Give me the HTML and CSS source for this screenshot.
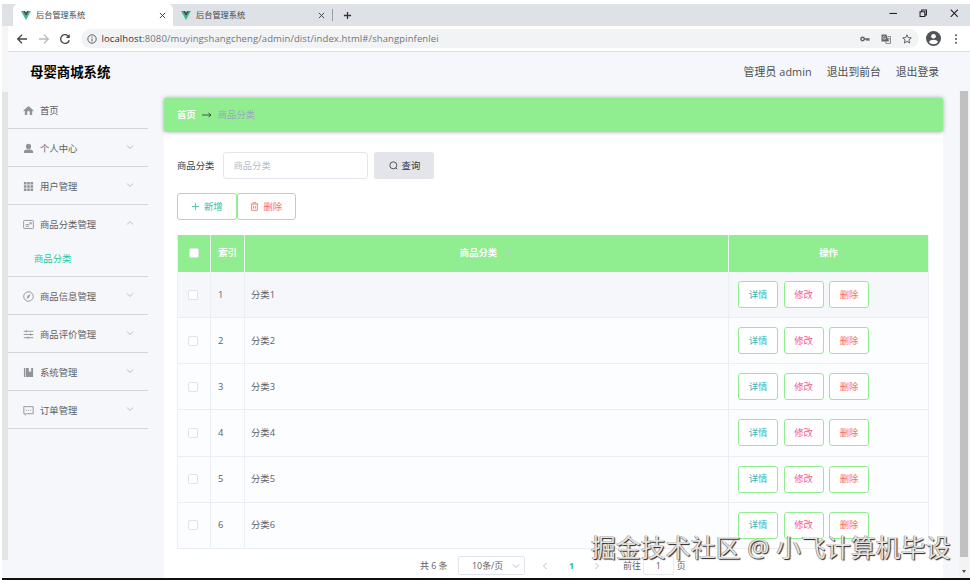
FILE: index.html
```
<!DOCTYPE html>
<html lang="zh-CN">
<head>
    <meta charset="UTF-8">
    <meta name="viewport" content="width=device-width, initial-scale=1.0">
    <title>后台管理系统</title>
    <link rel="stylesheet" href="styles.css">
</head>
<body>
    <!-- 图标 -->
    <svg class="sprite" width="0" height="0">
        <symbol id="vue" viewBox="0 0 10 9"><path d="M0 0h2l3 5.2L8 0h2L5 9z" fill="#41b883"/><path d="M2 0h2l1 1.8L6 0h2L5 5.2z" fill="#35495e"/></symbol>
        <symbol id="close" viewBox="0 0 8 8"><path d="M1 1l6 6M7 1L1 7"/></symbol>
        <symbol id="down" viewBox="0 0 8 8"><path d="M1 2.5l3 3 3-3"/></symbol>
        <symbol id="up" viewBox="0 0 8 8"><path d="M1 5.5l3-3 3 3"/></symbol>
        <symbol id="left" viewBox="0 0 8 8"><path d="M5.5 1l-3 3 3 3"/></symbol>
        <symbol id="right" viewBox="0 0 8 8"><path d="M2.5 1l3 3-3 3"/></symbol>
    </svg>

    <div class="browser">
        <div class="tabs">
            <div class="tab active">
                <svg class="logo"><use href="#vue"/></svg>
                <span>后台管理系统</span>
                <svg class="tab-close"><use href="#close"/></svg>
            </div>
            <div class="tab">
                <svg class="logo"><use href="#vue"/></svg>
                <span>后台管理系统</span>
                <svg class="tab-close"><use href="#close"/></svg>
            </div>
            <svg class="new-tab" viewBox="0 0 10 10"><path d="M5 1v8M1 5h8"/></svg>
            <div class="window-buttons">
                <svg viewBox="0 0 8 8"><path d="M.5 4.2h7"/></svg>
                <svg viewBox="0 0 8 8"><path d="M1 2.5h4.5V7H1zM2.5 2.5V1H7v4.5H5.5"/></svg>
                <svg viewBox="0 0 8 8"><path d="M.7.7l6.6 6.6M7.3.7L.7 7.3"/></svg>
            </div>
        </div>

        <div class="toolbar">
            <svg class="nav" viewBox="0 0 12 12"><path d="M11 6H2M6 1.7L1.7 6 6 10.3"/></svg>
            <svg class="nav disabled" viewBox="0 0 12 12"><path d="M1 6h9M6 1.7L10.3 6 6 10.3"/></svg>
            <svg class="nav" viewBox="0 0 12 12"><path d="M10 4A4.4 4.4 0 1 0 10.3 7.2"/><path d="M10.7 1v4H6.8z" fill="#444" stroke="none"/></svg>
            <div class="address">
                <svg class="info" viewBox="0 0 10 10"><circle cx="5" cy="5" r="4.2"/><path d="M5 4.5v3M5 2.4v1.2"/></svg>
                <span class="url"><b>localhost</b>:8080/muyingshangcheng/admin/dist/index.html#/shangpinfenlei</span>
                <svg class="tool" viewBox="0 0 10 10"><circle cx="2.6" cy="5" r="1.7" stroke-width="1.4"/><path d="M4.3 5h5.2M7 5v1.8M8.8 5v1.8" stroke-width="1.4"/></svg>
                <svg class="tool" viewBox="0 0 10 10"><path d="M.5.5h5l2 7h-7z" fill="#666" stroke="none"/><path d="M6.5 2.5h3v7H5l-.6-2M6 4.8h3M7.4 4.3c0 1.5-.7 2.3-1 2.5M6.5 5.5l2 2" stroke-width=".7"/><path d="M4.6 3A1.5 1.5 0 1 0 4.7 4.3H3.3" stroke="#fff" stroke-width=".6"/></svg>
                <svg class="tool" viewBox="0 0 10 10"><path d="M5 .8l1.2 2.8 3.1.3-2.4 2 .8 3.1L5 7.4 2.3 9l.8-3.1-2.4-2 3.1-.3z"/></svg>
            </div>
            <svg class="avatar" viewBox="0 0 14 14"><circle cx="7" cy="7" r="7" fill="#505357"/><circle cx="7" cy="4.9" r="2.2" fill="#fff"/><path d="M2.8 10.3c1.2-2.7 7.2-2.7 8.4 0-1.9 2.7-6.5 2.7-8.4 0z" fill="#fff"/></svg>
            <svg class="more" viewBox="0 0 4 10"><circle cx="2" cy="1.3" r="1"/><circle cx="2" cy="5" r="1"/><circle cx="2" cy="8.7" r="1"/></svg>
        </div>

        <div class="page">
            <header class="header">
                <h1>母婴商城系统</h1>
                <span>管理员 admin</span>
                <span>退出到前台</span>
                <span>退出登录</span>
            </header>

            <div class="container">
                <!-- 侧边菜单 -->
                <ul class="menu">
                    <li><div class="menu-item">
                        <svg class="icon" viewBox="0 0 12 12"><path class="fill" d="M6 1L.7 5.6V7L2 6.3V11h2.6V8a1.4 1.4 0 0 1 2.8 0v3H10V6.3l1.3.7V5.6z"/></svg>首页
                    </div></li>
                    <li><div class="menu-item">
                        <svg class="icon" viewBox="0 0 12 12"><circle class="fill" cx="6" cy="3.7" r="2.8"/><path class="fill" d="M1 11V9.3C1 7.3 4 7 6 7s5 .3 5 2.3V11z"/></svg>个人中心
                        <svg class="arrow"><use href="#down"/></svg>
                    </div></li>
                    <li><div class="menu-item">
                        <svg class="icon" viewBox="0 0 12 12"><path class="fill" d="M1 1h2.8v2.8H1zM4.6 1h2.8v2.8H4.6zM8.2 1H11v2.8H8.2zM1 4.6h2.8v2.8H1zM4.6 4.6h2.8v2.8H4.6zM8.2 4.6H11v2.8H8.2zM1 8.2h2.8V11H1zM4.6 8.2h2.8V11H4.6zM8.2 8.2H11V11H8.2z"/></svg>用户管理
                        <svg class="arrow"><use href="#down"/></svg>
                    </div></li>
                    <li class="open"><div class="menu-item">
                        <svg class="icon" viewBox="0 0 12 12"><rect x=".7" y="1.6" width="10.6" height="8.8" rx=".8"/><path d="M3 6h3M3 8h3.5M6 6.5l2.5-2.3M7 4h2v2"/></svg>商品分类管理
                        <svg class="arrow"><use href="#up"/></svg>
                    </div>
                    <div class="sub-item">商品分类</div></li>
                    <li><div class="menu-item">
                        <svg class="icon" viewBox="0 0 12 12"><circle cx="6" cy="6" r="5.2"/><path class="fill" d="M8.2 3.2L6.8 6.8 3.8 8.8 5.2 5.2z"/></svg>商品信息管理
                        <svg class="arrow"><use href="#down"/></svg>
                    </div></li>
                    <li><div class="menu-item">
                        <svg class="icon" viewBox="0 0 12 12"><path d="M.8 2.5h10.4M.8 6h10.4M.8 9.5h10.4M3.5 1.3v2.4M8.3 4.8v2.4M5.5 8.3v2.4"/></svg>商品评价管理
                        <svg class="arrow"><use href="#down"/></svg>
                    </div></li>
                    <li><div class="menu-item">
                        <svg class="icon" viewBox="0 0 12 12"><path class="fill" d="M1 1h1.6v10H1zM3.3 1h3v4.5l1.3-1 1.3 1V1H11v10H3.3z"/></svg>系统管理
                        <svg class="arrow"><use href="#down"/></svg>
                    </div></li>
                    <li><div class="menu-item">
                        <svg class="icon" viewBox="0 0 12 12"><path d="M.9 1.8h10.2v7.7H4L2.3 11V9.5H.9zM3 5.7h1.2M5.4 5.7h1.2M7.8 5.7H9"/></svg>订单管理
                        <svg class="arrow"><use href="#down"/></svg>
                    </div></li>
                </ul>

                <main class="main">
                    <div class="breadcrumb">
                        <b>首页</b>
                        <svg viewBox="0 0 10 6"><path d="M0 3h9M6.5 1L9 3 6.5 5"/></svg>
                        <span>商品分类</span>
                    </div>

                    <div class="content">
                        <form class="search">
                            <label for="name">商品分类</label>
                            <input type="text" id="name" placeholder="商品分类">
                            <button type="button" class="btn-search">
                                <svg viewBox="0 0 10 10"><circle cx="4.8" cy="4.8" r="3.9"/><path d="M7.6 7.6l1.5 1.5"/></svg>查询
                            </button>
                        </form>

                        <div class="actions">
                            <button type="button" class="btn add"><svg viewBox="0 0 10 10"><path d="M5 1v8M1 5h8"/></svg>新增</button>
                            <button type="button" class="btn delete"><svg viewBox="0 0 10 10"><path d="M.8 2.3h8.4M3.3 2.3V.8h3.4v1.5M1.8 2.3v7h6.4v-7M4 4.2v3.2M6 4.2v3.2"/></svg>删除</button>
                        </div>

                        <table class="table">
                            <colgroup><col class="c1"><col class="c2"><col class="c3"><col class="c4"></colgroup>
                            <thead>
                                <tr>
                                    <th><i class="check"></i></th>
                                    <th>索引</th>
                                    <th>商品分类<i class="sort"></i></th>
                                    <th>操作</th>
                                </tr>
                            </thead>
                            <tbody>
                                <tr class="hover"><td><i class="check"></i></td><td>1</td><td>分类1</td><td><div class="row-btns"><button class="btn info-btn">详情</button><button class="btn edit">修改</button><button class="btn delete">删除</button></div></td></tr>
                                <tr><td><i class="check"></i></td><td>2</td><td>分类2</td><td><div class="row-btns"><button class="btn info-btn">详情</button><button class="btn edit">修改</button><button class="btn delete">删除</button></div></td></tr>
                                <tr><td><i class="check"></i></td><td>3</td><td>分类3</td><td><div class="row-btns"><button class="btn info-btn">详情</button><button class="btn edit">修改</button><button class="btn delete">删除</button></div></td></tr>
                                <tr><td><i class="check"></i></td><td>4</td><td>分类4</td><td><div class="row-btns"><button class="btn info-btn">详情</button><button class="btn edit">修改</button><button class="btn delete">删除</button></div></td></tr>
                                <tr><td><i class="check"></i></td><td>5</td><td>分类5</td><td><div class="row-btns"><button class="btn info-btn">详情</button><button class="btn edit">修改</button><button class="btn delete">删除</button></div></td></tr>
                                <tr><td><i class="check"></i></td><td>6</td><td>分类6</td><td><div class="row-btns"><button class="btn info-btn">详情</button><button class="btn edit">修改</button><button class="btn delete">删除</button></div></td></tr>
                            </tbody>
                        </table>

                        <!-- 分页 -->
                        <div class="pagination">
                            <span class="total">共 6 条</span>
                            <span class="size">10条/页<svg><use href="#down"/></svg></span>
                            <svg class="prev"><use href="#left"/></svg>
                            <b class="current">1</b>
                            <svg class="next"><use href="#right"/></svg>
                            <span>前往</span>
                            <span class="jump">1</span>
                            <span>页</span>
                        </div>
                    </div>
                </main>

                <div class="scrollbar">
                    <div class="thumb"></div>
                    <i class="scroll-down"></i>
                </div>
            </div>
        </div>
    </div>

    <div class="watermark">掘金技术社区 @ 小飞计算机毕设</div>
</body>
</html>
```

FILE: styles.css
```
* {
    box-sizing: border-box;
}
body {
    margin: 0;
    width: 970px;
    height: 580px;
    padding: 4px 0 0 2px;
    overflow: hidden;
    position: relative;
    background: #fff;
    color: #5d6066;
    font-family: "Open Sans", "Noto Sans CJK SC", sans-serif;
    font-size: 9.35px;
    line-height: 14px;
    white-space: nowrap;
}
svg {
    fill: none;
    stroke: currentColor;
    flex: none;
}
.sprite {
    display: none;
}
button, input {
    font: inherit;
    margin: 0;
}
.browser {
    height: 576px;
    display: flex;
    flex-direction: column;
    border-bottom: 2px solid #111;
    background: linear-gradient(#f5f5f5 88px, #e5e4e5 88px, #e5e4e5 556px, #f5f7fa 556px) no-repeat left / 6px 100%;
}

/* 浏览器标签栏 */
.tabs {
    height: 22px;
    display: flex;
    align-items: center;
    padding-left: 11px;
    background: #dee1e6;
}
.tab {
    width: 160px;
    height: 12px;
    display: flex;
    align-items: center;
    padding: 0 7px 0 8px;
    font-size: 8.2px;
    color: #45484c;
    border-right: 1px solid #9a9da2;
}
.tab.active {
    height: 22px;
    background: #fff;
    border-right: 0;
    border-radius: 5px 5px 0 0;
}
.logo {
    width: 10px;
    height: 9px;
    margin-right: 5px;
    stroke: none;
}
.tab-close {
    width: 7px;
    height: 7px;
    margin-left: auto;
    color: #333;
}
.new-tab {
    width: 9px;
    height: 9px;
    margin-left: 10px;
    color: #333;
    stroke-width: 1.4;
}
.window-buttons {
    display: flex;
    gap: 22px;
    margin: 0 12px 3px auto;
    color: #222;
}
.window-buttons svg {
    width: 8.5px;
    height: 8.5px;
}

/* 地址栏 */
.toolbar {
    height: 26px;
    margin-left: 6px;
    padding-left: 8px;
    display: flex;
    align-items: center;
    background: #fff;
    border-bottom: 1px solid #dcdee1;
    color: #444;
}
.nav {
    width: 12px;
    height: 12px;
    margin-right: 9.5px;
    stroke-width: 1.3;
}
.nav.disabled {
    color: #b9bbbe;
}
.address {
    width: 838px;
    height: 19px;
    padding: 0 7px 0 6px;
    display: flex;
    align-items: center;
    gap: 11px;
    border-radius: 10px;
    background: #f1f3f4;
    color: #606368;
}
.info {
    width: 10px;
    height: 10px;
    margin-right: -6px;
}
.url {
    margin-right: auto;
    font-size: 9.5px;
    letter-spacing: 0.1px;
    color: #73767a;
}
.url b {
    font-weight: normal;
    color: #303235;
}
.tool {
    width: 10px;
    height: 10px;
}
.avatar {
    width: 15px;
    height: 15px;
    margin-left: 7px;
    stroke: none;
}
.more {
    width: 4px;
    height: 10px;
    margin-left: 13px;
    fill: #555;
    stroke: none;
}

/* 页面 */
.page {
    flex: 1;
    margin-left: 6px;
    display: flex;
    flex-direction: column;
    background: #f5f7fa;
}
.header {
    height: 39px;
    display: flex;
    align-items: center;
    gap: 15px;
    padding: 0 31px 0 22px;
    font-size: 10.8px;
    color: #4d4f53;
}
.header span:first-of-type {
    letter-spacing: 0.12px;
}
.header h1 {
    margin: 0 auto 0 0;
    font-size: 13.4px;
    color: #000;
}
.container {
    flex: 1;
    display: flex;
}
.menu {
    width: 140px;
    margin: 0 16px 0 0;
    padding: 0;
    list-style: none;
}
.menu li {
    height: 38px;
    border-bottom: 1px solid #d3d5d8;
}
.menu li.open {
    height: 72px;
}
.menu-item {
    height: 37px;
    display: flex;
    align-items: center;
    padding: 2px 14px 0 15px;
}
.icon {
    width: 11px;
    height: 11px;
    margin-right: 6px;
    color: #909399;
}
.icon .fill {
    fill: #909399;
    stroke: none;
}
.arrow {
    width: 8px;
    height: 8px;
    margin: 0 0 3px auto;
    color: #aaadb2;
    stroke-width: 0.8;
}
.sub-item {
    padding: 10px 0 0 26px;
    color: #1cc9a2;
}
.main {
    width: 779px;
    padding-top: 7px;
    background: linear-gradient(#f5f7fa 20px, #fff 20px);
}
.breadcrumb {
    height: 34px;
    display: flex;
    align-items: center;
    gap: 6px;
    padding-left: 13px;
    border-radius: 2px;
    background: #90ee90;
    box-shadow: 0 0 4px rgba(60, 60, 90, 0.45);
}
.breadcrumb b {
    color: #fff;
}
.breadcrumb svg {
    width: 10px;
    height: 6px;
    color: #303133;
    stroke-width: 0.8;
}
.breadcrumb span {
    color: #97a8be;
}
.content {
    padding: 20px 14px 0 13px;
}
.search {
    height: 27px;
    display: flex;
    align-items: center;
    color: #3e4044;
}
.search input {
    width: 145px;
    height: 27px;
    margin: 0 6px 0 9px;
    padding: 0 9px;
    border: 1px solid #e3e6ec;
    border-radius: 3px;
}
.search input::placeholder {
    color: #b9bcc4;
}
.btn-search {
    width: 60px;
    height: 27px;
    display: flex;
    align-items: center;
    justify-content: center;
    gap: 4px;
    padding: 0;
    border: 0;
    border-radius: 3px;
    background: #e4e5ea;
    color: #333;
}
.btn-search svg, .actions svg {
    width: 9px;
    height: 9px;
    stroke-width: 0.9;
}
.actions {
    display: flex;
    margin: 14px 0 15px;
}
.btn {
    width: 40px;
    height: 27px;
    display: flex;
    align-items: center;
    justify-content: center;
    gap: 4px;
    padding: 0;
    border: 1px solid #90ee90;
    border-radius: 3px;
    background: #fff;
}
.actions .btn {
    width: 59.5px;
}
.btn.add {
    color: #30bfa4;
}
.btn.delete {
    color: #f56c6c;
}
.btn.info-btn {
    color: #35b5bd;
}
.btn.edit {
    color: #f0609a;
}
.table {
    width: 752px;
    table-layout: fixed;
    border-spacing: 0;
    border-left: 1px solid #ebeef5;
}
.c1 {
    width: 33px;
}
.c2 {
    width: 34px;
}
.c4 {
    width: 200px;
}
.table th {
    height: 37px;
    padding: 0 0 1px;
    background: #90ee90;
    border-right: 1px solid #ebf5ee;
    color: #fff;
}
.table th:nth-child(3) {
    padding-right: 4px;
}
.table td {
    height: 46.15px;
    padding: 0 0 0 6px;
    border-right: 1px solid #ebeef5;
    border-bottom: 1px solid #ebeef5;
    background: #fcfdff;
}
.table .hover td {
    background: #f5f7fa;
}
.table td:first-child {
    padding: 0;
}
.table td:nth-child(4) {
    padding-left: 9px;
}
.table td:nth-child(2) {
    padding-left: 7px;
}
.check {
    display: block;
    width: 10px;
    height: 10px;
    margin: 0 auto;
    border: 1px solid #dfe2e8;
    border-radius: 2px;
    background: #fff;
}
td .check {
    margin-left: 10px;
}
.sort {
    display: inline-block;
    width: 4px;
    height: 7px;
    margin-left: 8px;
    background: #a5dcae;
}
.row-btns {
    display: flex;
    gap: 5.5px;
}

/* 分页 */
.pagination {
    height: 20px;
    display: flex;
    align-items: center;
    margin-top: 7px;
    padding-left: 243px;
    font-size: 8.9px;
}
.pagination svg {
    width: 8px;
    height: 8px;
    stroke-width: 0.8;
    color: #a9acb3;
}
.total {
    width: 38px;
}
.size {
    width: 67px;
    height: 19px;
    display: flex;
    align-items: center;
    justify-content: space-between;
    padding: 0 4px 0 13px;
    border: 1px solid #e1e4ea;
    border-radius: 2px;
}
.pagination .prev {
    margin-left: 16px;
}
.current {
    margin: 0 19px 0 20px;
    color: #2dbd86;
}
.pagination .next {
    margin-right: 22px;
}
.jump {
    width: 31px;
    height: 19px;
    margin: 0 3px 0 2px;
    line-height: 17px;
    text-align: center;
    border: 1px solid #e8eaef;
    border-radius: 2px;
}
.scrollbar {
    width: 10px;
    margin-left: 16px;
    display: flex;
    flex-direction: column;
    align-items: center;
    background: #f3f3f4;
}
.thumb {
    width: 8px;
    height: 466px;
    background: #c1c1c1;
}
.scroll-down {
    margin-top: 13px;
    border: 2.5px solid transparent;
    border-top: 3px solid #505050;
    border-bottom: 0;
}
.watermark {
    position: absolute;
    left: 591px;
    top: 535px;
    font-size: 24.8px;
    letter-spacing: 0.13px;
    line-height: 24px;
    color: #e2e2e2;
    text-shadow: 1px 1px 1px #222, -0.5px -0.5px 0 #777;
}
```
